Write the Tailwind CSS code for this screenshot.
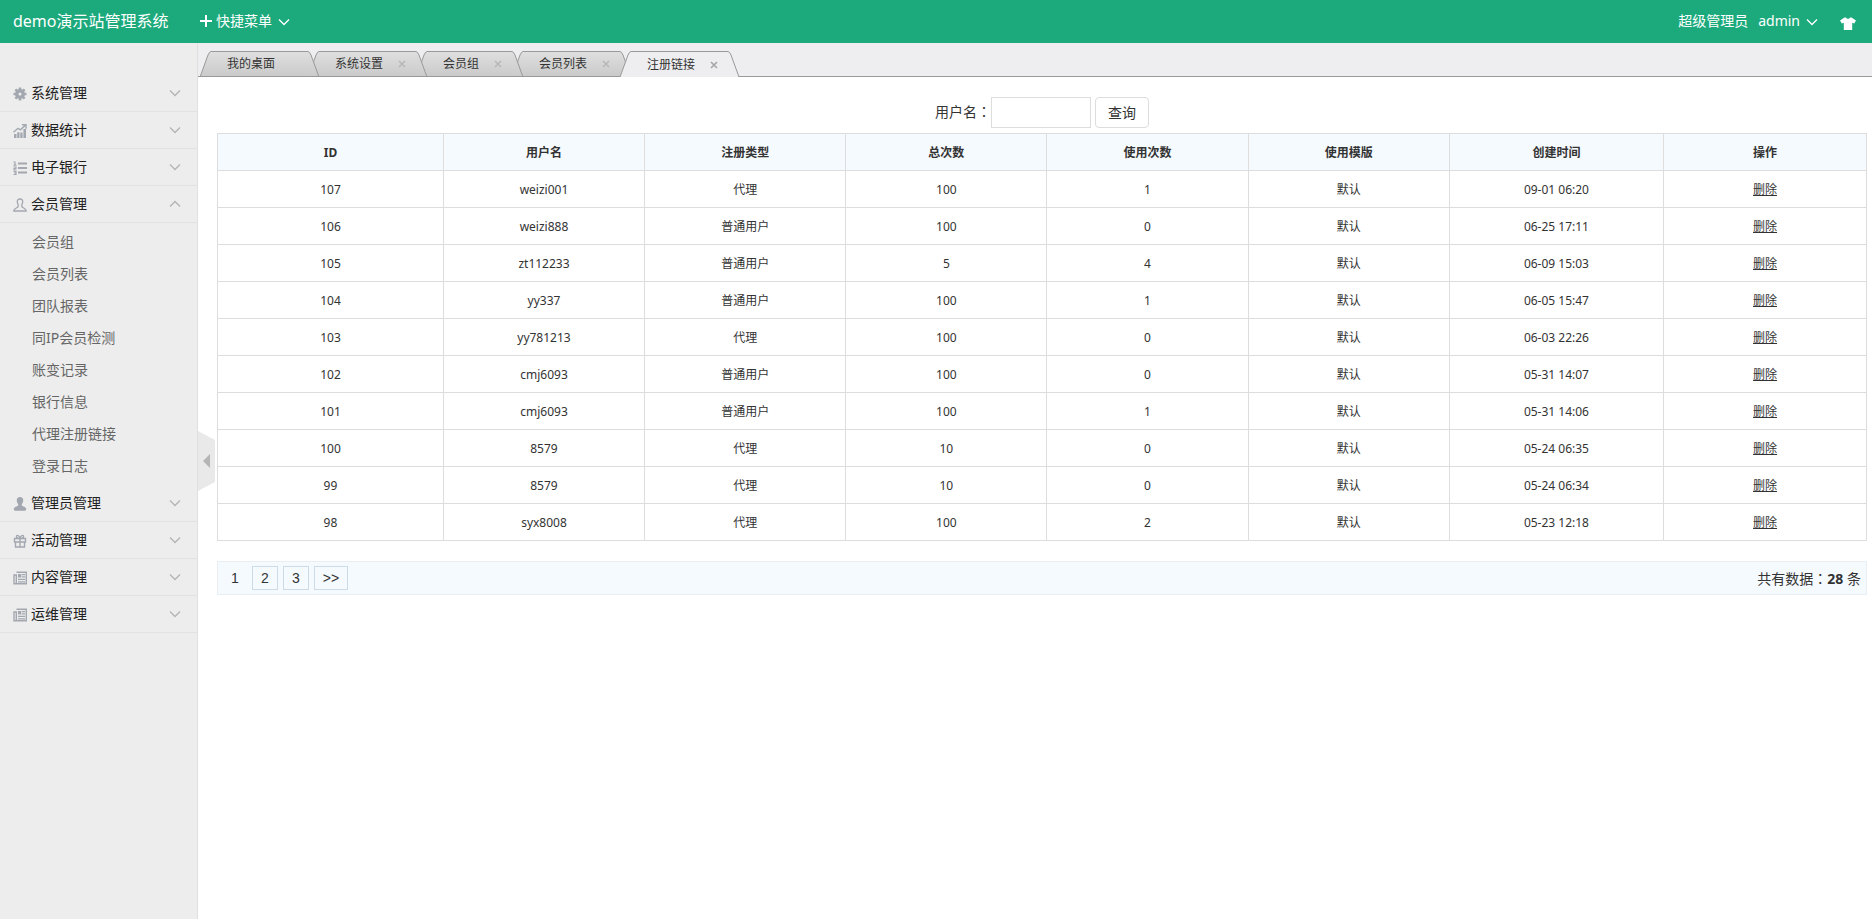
<!DOCTYPE html>
<html lang="zh-CN">
<head>
<meta charset="utf-8">
<title>demo演示站管理系统</title>
<script src="https://cdn.jsdelivr.net/npm/@tailwindcss/browser@4"></script>
</head>
<body class="flex min-h-screen flex-col bg-white font-['Noto_Sans','Noto_Sans_CJK_SC',sans-serif] text-sm text-[#333]">
<svg class="hidden" aria-hidden="true">
  <symbol id="chev" viewBox="0 0 12 8"><path d="M1 1.5l5 5 5-5" fill="none" stroke="currentColor" stroke-width="1.3"/></symbol>
  <symbol id="x" viewBox="0 0 8 8"><path d="M1 1l6 6M7 1l-6 6" fill="none" stroke="currentColor" stroke-width="1.6"/></symbol>
  <symbol id="gear" viewBox="0 0 14 14"><circle cx="7" cy="7" r="3.200" fill="none" stroke="currentColor" stroke-width="3.400"/><path d="M7 .5v3M7 10.500v3M.5 7h3M10.500 7h3M2.400 2.400l2 2M9.600 9.600l2 2M2.400 11.600l2-2M9.600 4.400l2-2" stroke="currentColor" stroke-width="2.600"/></symbol>
  <symbol id="chart" viewBox="0 0 14 14"><path fill="currentColor" d="M1 10h2.500v4H1zM4.200 8.200h2.300V14H4.200zM7.300 8.500h2.300V14H7.300zM10.400 5h2.600v9h-2.600z"/><path d="M.5 8.300l4.500-4 2.500 1.500L12 1.500M9 .8h4v4" fill="none" stroke="currentColor" stroke-width="1.400"/></symbol>
  <symbol id="list" viewBox="0 0 14 14"><path fill="currentColor" d="M5 1.500h9v2H5zM5 6h9v2H5zM5 10.500h9v2H5z"/><path d="M.5 1H2v3M.5 4.200h3M.5 6h2.500v1.500H1V9h2.500M.5 10.500h2.500v3H.5M1 12h2" fill="none" stroke="currentColor" stroke-width="1.200"/></symbol>
  <symbol id="user" viewBox="0 0 14 14"><path d="M7 1C5 1 4 2.300 4.300 4.200c.2 1.300.9 2.300 1 3.300.1 1.200-.4 1.900-2 2.500-1.500.5-2.500.8-2.500 3h12.400c0-2.200-1-2.500-2.500-3-1.600-.6-2.100-1.300-2-2.500.1-1 .8-2 1-3.300C10 2.300 9 1 7 1z" fill="none" stroke="currentColor" stroke-width="1.300"/></symbol>
  <symbol id="userfill" viewBox="0 0 14 14"><path d="M7 0C4.600 0 3.500 1.600 3.800 4c.2 1.500.8 2.500 1.400 3.200v1.300C4.200 9.500.8 9.800.8 12c0 1.500 1 1.700 2 1.700h8.400c1 0 2-.2 2-1.700 0-2.200-3.400-2.500-4.400-3.500V7.200c.6-.7 1.200-1.700 1.400-3.200C10.500 1.600 9.400 0 7 0z" fill="currentColor"/></symbol>
  <symbol id="gift" viewBox="0 0 14 14"><path d="M1.500 4.500h11V8h-11zM2.500 8h9v5h-9zM7 4.500V13M7 4.300C5 4.500 3 3.500 3.500 2 4.500.5 6.500 2 7 4.300 7.500 2 9.500.5 10.500 2c.5 1.500-1.500 2.500-3.500 2.300z" fill="none" stroke="currentColor" stroke-width="1.400"/></symbol>
  <symbol id="news" viewBox="0 0 14 14"><path d="M3.500 1.200h9.800v11.600H1V4h2.300v8" fill="none" stroke="currentColor" stroke-width="1.400"/><path d="M5 3h3.300v3.500H5zM9 3h3v1.200H9zM9 5.300h3v1.200H9zM5 7.800h7V9H5zM5 10.200h7v1.200H5z" fill="currentColor"/></symbol>
</svg>

<header class="flex h-[43px] shrink-0 items-center bg-[#1caa7c] pr-4 pb-px pl-[13px] text-white">
  <a href="#" class="w-[187px] text-base">demo演示站管理系统</a>
  <button type="button" class="flex items-center">
    <svg class="mr-1 size-3" viewBox="0 0 12 12"><path d="M6 0v12M0 6h12" stroke="currentColor" stroke-width="2"/></svg>快捷菜单<svg class="mt-0.5 ml-[6px] h-2 w-3"><use href="#chev"/></svg>
  </button>
  <span class="ml-auto">超级管理员</span>
  <button type="button" class="ml-[10px] flex items-center">admin<svg class="mt-0.5 ml-[6px] h-2 w-3"><use href="#chev"/></svg></button>
  <button type="button" class="ml-[22px]" aria-label="换肤"><svg class="mt-1 h-[13px] w-4" viewBox="0 0 16 13"><path fill="currentColor" d="M4.500.5L0 3.500 1.800 6.500 3.800 5.800V13h8.400V5.800l2 .7L16 3.500 11.500.5H10C9.500 2.200 6.500 2.200 6 .5z"/></svg></button>
</header>

<div class="flex grow">
  <aside class="w-[198px] shrink-0 border-r border-[#e0e0e0] bg-[#ededed] pt-8">
    <nav id="menu"></nav>
  </aside>

  <main class="relative min-w-0 grow">
    <div class="flex h-[34px] bg-[#eeeef0]">
      <ul id="tabs" class="flex grow items-end border-b border-[#999] pl-[2px] text-xs"></ul>
    </div>

    <button type="button" class="absolute top-[388px] left-0 h-[60px] w-[17px]" aria-label="收起菜单">
      <svg class="h-[60px] w-[17px]" viewBox="0 0 17 60"><path fill="#e9e9e9" d="M0 0l17 9v42L0 60z"/><path fill="#b5b5b5" d="M12 23v14l-7-7z"/></svg>
    </button>

    <div class="pt-5 pr-[5px] pl-[19px]">
      <form class="flex items-start justify-center">
        <label for="username" class="leading-7">用户名<span class="font-['Noto_Sans_CJK_TC',sans-serif]" lang="zh-TW">：</span></label>
        <input id="username" type="text" class="h-[31px] w-[100px] border border-[#ddd] px-1 outline-none">
        <button type="button" class="ml-1 h-[31px] w-[54px] rounded border border-[#ddd] bg-white">查询</button>
      </form>

      <table class="mt-[5px] w-full table-fixed border-collapse text-center text-xs">
        <colgroup><col class="w-[13.7%]"><col class="w-[12.2%]"><col class="w-[12.2%]"><col class="w-[12.2%]"><col class="w-[12.2%]"><col class="w-[12.2%]"><col class="w-[13%]"><col></colgroup>
        <thead class="bg-[#f5fafe]"><tr id="head"></tr></thead>
        <tbody id="rows"></tbody>
      </table>

      <div class="mt-5 flex h-[34px] items-center border border-[#e8eef2] bg-[#f5fafe] pr-[5px] pl-[5px]">
        <nav class="flex gap-[5px] text-center font-['Liberation_Sans',sans-serif] leading-[22px]">
          <span class="w-6 py-px">1</span>
          <a href="#" class="w-[26px] border border-[#ccdce6]">2</a>
          <a href="#" class="w-[26px] border border-[#ccdce6]">3</a>
          <a href="#" class="w-[34px] border border-[#ccdce6]">&gt;&gt;</a>
        </nav>
        <p class="ml-auto">共有数据<span class="font-['Noto_Sans_CJK_TC',sans-serif]" lang="zh-TW">：</span><strong>28</strong> 条</p>
      </div>
    </div>
  </main>
</div>

<script>
const menu = [
  ['gear', '系统管理'], ['chart', '数据统计'], ['list', '电子银行'],
  ['user', '会员管理', ['会员组', '会员列表', '团队报表', '同IP会员检测', '账变记录', '银行信息', '代理注册链接', '登录日志']],
  ['userfill', '管理员管理'], ['gift', '活动管理'], ['news', '内容管理'], ['news', '运维管理']
];
document.getElementById('menu').innerHTML = menu.map(([icon, name, subs]) => `
  <button type="button" class="flex h-[37px] w-full items-center border-b border-[#e2e2e2] pr-4 pl-[13px] text-[#222]">
    <svg class="mt-0.5 mr-1 size-[14px] text-[#a3a8b0]"><use href="#${icon}"/></svg>${name}
    <svg class="ml-auto h-2 w-3 text-[#b4b4b4] ${subs ? 'rotate-180' : ''}"><use href="#chev"/></svg>
  </button>
  ${subs ? `<ul class="py-[3px] pl-8 leading-8 text-[#666]">${subs.map(s => `<li><a href="#">${s}</a></li>`).join('')}</ul>` : ''}`).join('');

const tabs = [['我的桌面', 'z-40'], ['系统设置', 'z-30'], ['会员组', 'z-20'], ['会员列表', 'z-10'], ['注册链接', 'z-50']];
document.getElementById('tabs').innerHTML = tabs.map(([name, z], i) => {
  const on = i === 4;
  const fill = on ? '#eeeef0' : 'url(#shade)';
  const base = on ? '' : '<path d="M0 25.5h11" stroke="#999"/>';
  return `<li class="relative -mb-px flex h-[26px] ${z} ${i ? '-ml-[11px]' : ''}">
    <svg class="h-[26px] w-[11px]" viewBox="0 0 11 26"><path d="M0 26L8 4Q9.500.5 11 .5V26z" fill="${fill}"/><path d="M0 26L8 4Q9.500.5 11 .5" fill="none" stroke="#999"/>${base}</svg>
    <div class="flex items-center border-t border-[#999] pr-[10px] pl-4 ${on ? 'bg-[#eeeef0]' : 'border-b bg-linear-to-b from-[#dfdfdf] to-[#cacaca]'}">
      <a href="#">${name}</a>
      ${i ? `<button type="button" class="ml-[15px] ${on ? 'text-[#a5a5a5]' : 'text-[#b8b8b8]'}" aria-label="关闭"><svg class="size-2"><use href="#x"/></svg></button>` : '<span class="w-[23px]"></span>'}
    </div>
    <svg class="h-[26px] w-[11px]" viewBox="0 0 11 26"><path d="M11 26L3 4Q1.500.5 0 .5V26z" fill="${fill}"/><path d="M11 26L3 4Q1.500.5 0 .5" fill="none" stroke="#999"/>${base}</svg>
  </li>`;
}).join('') + '<svg class="absolute size-0" aria-hidden="true"><linearGradient id="shade" gradientUnits="userSpaceOnUse" x1="0" y1="0" x2="0" y2="26"><stop stop-color="#dfdfdf"/><stop offset="1" stop-color="#cacaca"/></linearGradient></svg>';

document.getElementById('head').innerHTML = ['ID', '用户名', '注册类型', '总次数', '使用次数', '使用模版', '创建时间', '操作']
  .map(h => `<th class="h-[37px] border border-[#ddd] pt-0.5 font-bold">${h}</th>`).join('');
const rows = [
  [107, 'weizi001', '代理', 100, 1, '09-01 06:20'],
  [106, 'weizi888', '普通用户', 100, 0, '06-25 17:11'],
  [105, 'zt112233', '普通用户', 5, 4, '06-09 15:03'],
  [104, 'yy337', '普通用户', 100, 1, '06-05 15:47'],
  [103, 'yy781213', '代理', 100, 0, '06-03 22:26'],
  [102, 'cmj6093', '普通用户', 100, 0, '05-31 14:07'],
  [101, 'cmj6093', '普通用户', 100, 1, '05-31 14:06'],
  [100, '8579', '代理', 10, 0, '05-24 06:35'],
  [99, '8579', '代理', 10, 0, '05-24 06:34'],
  [98, 'syx8008', '代理', 100, 2, '05-23 12:18']
];
document.getElementById('rows').innerHTML = rows.map(r =>
  '<tr>' + [...r.slice(0, 5), '默认', r[5], '<a href="#" class="underline">删除</a>']
    .map(c => `<td class="h-[37px] border border-[#ddd] pt-0.5">${c}</td>`).join('') + '</tr>').join('');
</script>
</body>
</html>
